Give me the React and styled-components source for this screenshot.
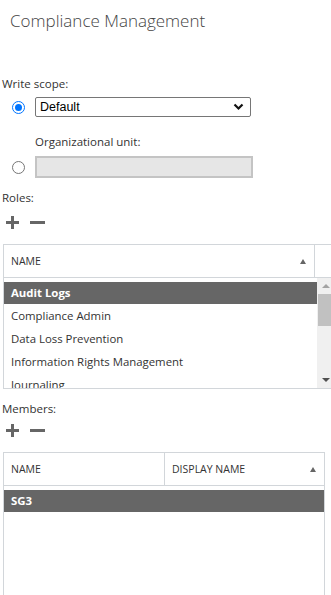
import React from "react";
import styled, { createGlobalStyle } from "styled-components";

const GlobalStyle = createGlobalStyle`
  body {
    margin: 0;
    background: #fff;
    font-family: "Open Sans", "Noto Sans", sans-serif;
    color: #333;
  }
`;

const Page = styled.div`
  width: 331px;
  height: 595px;
  overflow: hidden;
  padding-left: 2px;
  box-sizing: border-box;
`;

const Title = styled.h1`
  margin: 0;
  padding: 9px 0 0 8px;
  font-size: 17px;
  font-weight: 300;
  line-height: 24px;
  color: #444;
`;

const Label = styled.div`
  font-size: 11.5px;
  line-height: 16px;
  color: #333;
  margin-top: ${(p) => p.top || 0}px;
  margin-left: ${(p) => p.indent || 0}px;
`;

const RadioRow = styled.div`
  display: flex;
  align-items: center;
  margin-top: ${(p) => p.top || 0}px;
  height: ${(p) => p.h || 20}px;
`;

const Radio = styled.span`
  width: 13px;
  height: 13px;
  box-sizing: border-box;
  border-radius: 50%;
  margin-left: 10px;
  margin-right: 10px;
  border: 1px solid ${(p) => (p.checked ? "#0075ff" : "#767676")};
  display: flex;
  align-items: center;
  justify-content: center;
  &::after {
    content: "";
    display: ${(p) => (p.checked ? "block" : "none")};
    width: 7px;
    height: 7px;
    border-radius: 50%;
    background: #0075ff;
  }
`;

const Select = styled.div`
  width: 216px;
  height: 20px;
  box-sizing: border-box;
  border: 1px solid #767676;
  border-radius: 2px;
  display: flex;
  align-items: center;
  justify-content: space-between;
  padding: 0 6px 0 4px;
  font-family: "Liberation Sans", Arial, sans-serif;
  font-size: 12.5px;
  color: #000;
`;

const DisabledInput = styled.div`
  width: 218px;
  height: 22px;
  box-sizing: border-box;
  border: 2px solid #c4c4c4;
  background: #e6e6e6;
`;

const IconBar = styled.div`
  display: flex;
  align-items: center;
  gap: 10px;
  height: 16px;
  margin-top: ${(p) => p.top || 0}px;
  padding-left: 3px;
`;

const Table = styled.div`
  margin-top: ${(p) => p.top || 0}px;
  margin-left: 1px;
  width: ${(p) => p.w}px;
  border: 1px solid #d2d6da;
  border-bottom-width: ${(p) => (p.open ? 0 : 1)}px;
  box-sizing: border-box;
`;

const HeaderRow = styled.div`
  display: grid;
  grid-template-columns: ${(p) => p.cols};
  height: 32px;
  border-bottom: 1px solid #d2d6da;
`;

const HeaderCell = styled.div`
  display: flex;
  align-items: center;
  justify-content: space-between;
  padding: 0 8px 0 7px;
  font-size: 10.5px;
  color: #333;
  border-left: ${(p) => (p.divider ? "1px solid #d2d6da" : "none")};
`;

const SortArrow = styled.span`
  width: 0;
  height: 0;
  border-left: 3.5px solid transparent;
  border-right: 3.5px solid transparent;
  border-bottom: 5px solid #666;
`;

const Body = styled.div`
  display: flex;
  height: ${(p) => p.h}px;
  overflow: hidden;
`;

const Rows = styled.div`
  flex: 1;
  padding-top: 4px;
  overflow: hidden;
`;

const Row = styled.div`
  height: ${(p) => (p.selected ? 22 : 23)}px;
  margin-bottom: ${(p) => (p.selected ? 1 : 0)}px;
  line-height: 22px;
  padding-left: 7px;
  font-size: 11.4px;
  white-space: nowrap;
  color: ${(p) => (p.selected ? "#fff" : "#333")};
  background: ${(p) => (p.selected ? "#666" : "transparent")};
  font-weight: ${(p) => (p.selected ? 700 : 400)};
`;

const Scrollbar = styled.div`
  width: 17px;
  background: #f0f0f0;
  display: flex;
  flex-direction: column;
  align-items: center;
`;

const ScrollArrow = styled.span`
  width: 0;
  height: 0;
  margin: ${(p) => (p.down ? "auto 0 6px" : "6px 0 0")};
  border-left: 4px solid transparent;
  border-right: 4px solid transparent;
  ${(p) =>
    p.down ? "border-top: 4px solid #505050;" : "border-bottom: 4px solid #a3a3a3;"}
`;

const Thumb = styled.div`
  width: 15px;
  height: 32px;
  margin-top: 6px;
  background: #c1c1c1;
`;

const PlusIcon = () => (
  <svg width="15" height="15" viewBox="0 0 15 15">
    <path d="M7.5 1v13M1 7.5h13" stroke="#666" strokeWidth="3" />
  </svg>
);

const MinusIcon = () => (
  <svg width="15" height="15" viewBox="0 0 15 15">
    <path d="M0 7.5h15" stroke="#666" strokeWidth="3" />
  </svg>
);

const Chevron = () => (
  <svg width="11" height="8" viewBox="0 0 11 8">
    <path d="M1.5 1.5l4 4 4-4" stroke="#111" strokeWidth="2.2" fill="none" />
  </svg>
);

const roles = [
  "Audit Logs",
  "Compliance Admin",
  "Data Loss Prevention",
  "Information Rights Management",
  "Journaling",
];

export default function App() {
  return (
    <Page>
      <GlobalStyle />
      <Title>Compliance Management</Title>

      <Label top={43}>Write scope:</Label>
      <RadioRow top={5}>
        <Radio checked />
        <Select>
          <span>Default</span>
          <Chevron />
        </Select>
      </RadioRow>
      <Label top={17} indent={33}>
        Organizational unit:
      </Label>
      <RadioRow top={6} h={22}>
        <Radio />
        <DisabledInput />
      </RadioRow>

      <Label top={12}>Roles:</Label>
      <IconBar top={8}>
        <PlusIcon />
        <MinusIcon />
      </IconBar>
      <Table top={14} w={332}>
        <HeaderRow cols="310px 1fr">
          <HeaderCell>
            NAME <SortArrow />
          </HeaderCell>
          <HeaderCell divider />
        </HeaderRow>
        <Body h={110}>
          <Rows>
            {roles.map((r, i) => (
              <Row key={r} selected={i === 0}>
                {r}
              </Row>
            ))}
          </Rows>
          <Scrollbar>
            <ScrollArrow />
            <Thumb />
            <ScrollArrow down />
          </Scrollbar>
        </Body>
      </Table>

      <Label top={12}>Members:</Label>
      <IconBar top={5}>
        <PlusIcon />
        <MinusIcon />
      </IconBar>
      <Table top={14} w={322} open>
        <HeaderRow cols="160px 1fr">
          <HeaderCell>NAME</HeaderCell>
          <HeaderCell divider>
            DISPLAY NAME <SortArrow />
          </HeaderCell>
        </HeaderRow>
        <Body h={200}>
          <Rows>
            <Row selected>SG3</Row>
          </Rows>
        </Body>
      </Table>
    </Page>
  );
}
